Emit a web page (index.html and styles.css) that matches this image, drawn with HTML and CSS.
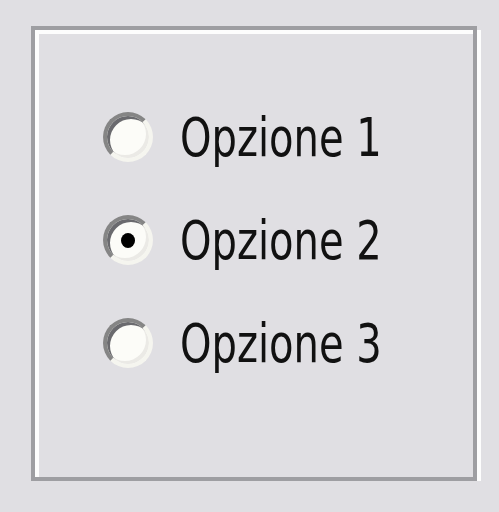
FILE: index.html
```html
<!DOCTYPE html>
<html lang="it">
<head>
    <meta charset="UTF-8">
    <meta name="viewport" content="width=device-width, initial-scale=1.0">
    <title>Opzioni</title>
    <link rel="stylesheet" href="styles.css">
</head>
<body>
    <div class="group">
        <label class="option">
            <span class="radio"></span>
            <span class="option-label">Opzione 1</span>
        </label>
        <label class="option">
            <span class="radio radio-checked"></span>
            <span class="option-label">Opzione 2</span>
        </label>
        <label class="option">
            <span class="radio"></span>
            <span class="option-label">Opzione 3</span>
        </label>
    </div>
</body>
</html>
```

FILE: styles.css
```css
body {
    margin: 0;
    background-color: #e0dfe3;
    font-family: "DejaVu Sans Condensed", "DejaVu Sans", sans-serif;
}
/* etched group box */
.group {
    box-sizing: border-box;
    margin: 26px 0 0 31px;
    width: 446px;
    height: 455px;
    border: 4px solid #9e9ea2;
    box-shadow: 4px 4px 0 #fdfdfd, inset 4px 4px 0 #fdfdfd;
    padding: 82px 0 0 68px;
    display: flex;
    flex-direction: column;
    gap: 53px;
}
.option {
    display: flex;
    align-items: center;
    gap: 27px;
    height: 50px;
}
.radio {
    flex: none;
    box-sizing: border-box;
    width: 50px;
    height: 50px;
    border-radius: 50%;
    border: 4px solid;
    border-color: #858585 #f5f5ef #f5f5ef #858585;
    box-shadow: inset 3px 3px 0 #6a6a6e, inset -3px -3px 0 #ebeae6;
    background-color: #fcfcf8;
    display: flex;
    align-items: center;
    justify-content: center;
}
.radio-checked::after {
    content: "";
    width: 14px;
    height: 15px;
    border-radius: 50%;
    background-color: #000;
}
.option-label {
    font-size: 53px;
    color: #111;
    line-height: 1;
    transform: scaleX(0.84);
    transform-origin: left center;
}
```
